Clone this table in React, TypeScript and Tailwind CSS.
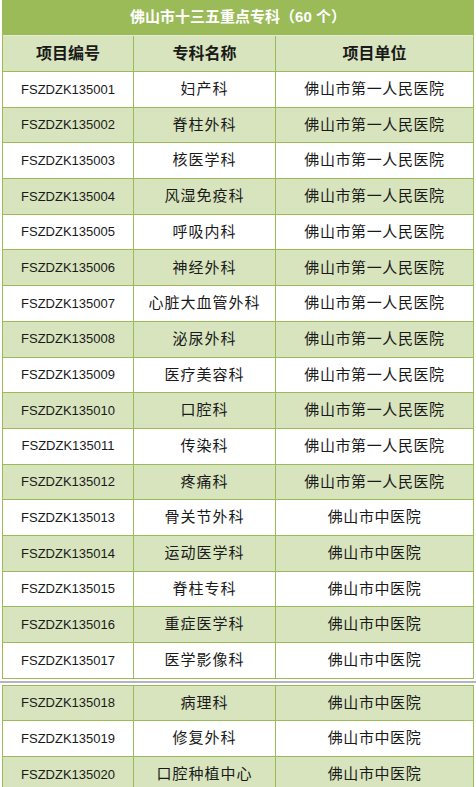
import React from 'react';

type Row = { code: string; name: string; unit: string };

const firstRows: Row[] = [
  { code: 'FSZDZK135001', name: '妇产科', unit: '佛山市第一人民医院' },
  { code: 'FSZDZK135002', name: '脊柱外科', unit: '佛山市第一人民医院' },
  { code: 'FSZDZK135003', name: '核医学科', unit: '佛山市第一人民医院' },
  { code: 'FSZDZK135004', name: '风湿免疫科', unit: '佛山市第一人民医院' },
  { code: 'FSZDZK135005', name: '呼吸内科', unit: '佛山市第一人民医院' },
  { code: 'FSZDZK135006', name: '神经外科', unit: '佛山市第一人民医院' },
  { code: 'FSZDZK135007', name: '心脏大血管外科', unit: '佛山市第一人民医院' },
  { code: 'FSZDZK135008', name: '泌尿外科', unit: '佛山市第一人民医院' },
  { code: 'FSZDZK135009', name: '医疗美容科', unit: '佛山市第一人民医院' },
  { code: 'FSZDZK135010', name: '口腔科', unit: '佛山市第一人民医院' },
  { code: 'FSZDZK135011', name: '传染科', unit: '佛山市第一人民医院' },
  { code: 'FSZDZK135012', name: '疼痛科', unit: '佛山市第一人民医院' },
  { code: 'FSZDZK135013', name: '骨关节外科', unit: '佛山市中医院' },
  { code: 'FSZDZK135014', name: '运动医学科', unit: '佛山市中医院' },
  { code: 'FSZDZK135015', name: '脊柱专科', unit: '佛山市中医院' },
  { code: 'FSZDZK135016', name: '重症医学科', unit: '佛山市中医院' },
  { code: 'FSZDZK135017', name: '医学影像科', unit: '佛山市中医院' },
];

const secondRows: Row[] = [
  { code: 'FSZDZK135018', name: '病理科', unit: '佛山市中医院' },
  { code: 'FSZDZK135019', name: '修复外科', unit: '佛山市中医院' },
  { code: 'FSZDZK135020', name: '口腔种植中心', unit: '佛山市中医院' },
];

const font = { fontFamily: '"Liberation Sans", "Noto Sans CJK SC", sans-serif' };

function DataRow({ row, green }: { row: Row; green: boolean }) {
  return (
    <div
      className={[
        'grid grid-cols-[131px_142px_197px] h-[35.7px] border-b border-[#9bbb59] text-[#1a1a1a]',
        green ? 'bg-[#d7e4bd]' : 'bg-white',
      ].join(' ')}
    >
      <div className="flex items-center justify-center border-r border-[#9bbb59] text-[13px]">
        {row.code}
      </div>
      <div className="flex items-center justify-center border-r border-[#9bbb59] text-[15px] tracking-[1px]">
        {row.name}
      </div>
      <div className="flex items-center justify-center text-[15px] tracking-[0.6px]">
        {row.unit}
      </div>
    </div>
  );
}

export default function App(): JSX.Element {
  return (
    <div className="w-[476px] h-[787px] overflow-hidden bg-white" style={font}>
      <div className="ml-[2px] w-[472px] border-l border-r border-[#9bbb59]">
        <div className="h-[36px] bg-[#9bbb59] flex items-center justify-center text-white font-bold text-[15px] border-b border-[#e2ebd0]">
          佛山市十三五重点专科（60 个）
        </div>
        <div className="grid grid-cols-[131px_142px_197px] h-[36px] bg-[#d7e4bd] border-b border-[#9bbb59] font-bold text-[16px] text-[#1a1a1a]">
          <div className="flex items-center justify-center border-r border-[#9bbb59]">项目编号</div>
          <div className="flex items-center justify-center border-r border-[#9bbb59]">专科名称</div>
          <div className="flex items-center justify-center">项目单位</div>
        </div>
        {firstRows.map((row, index) => (
          <DataRow key={row.code} row={row} green={index % 2 === 1} />
        ))}
      </div>
      <div className="h-[6px] flex flex-col justify-center bg-white">
        <div className="h-[2px] bg-[#b4b4c4]" />
      </div>
      <div className="ml-[2px] w-[472px] border-l border-r border-t border-[#9bbb59]">
        {secondRows.map((row, index) => (
          <DataRow key={row.code} row={row} green={index % 2 === 0} />
        ))}
      </div>
    </div>
  );
}
